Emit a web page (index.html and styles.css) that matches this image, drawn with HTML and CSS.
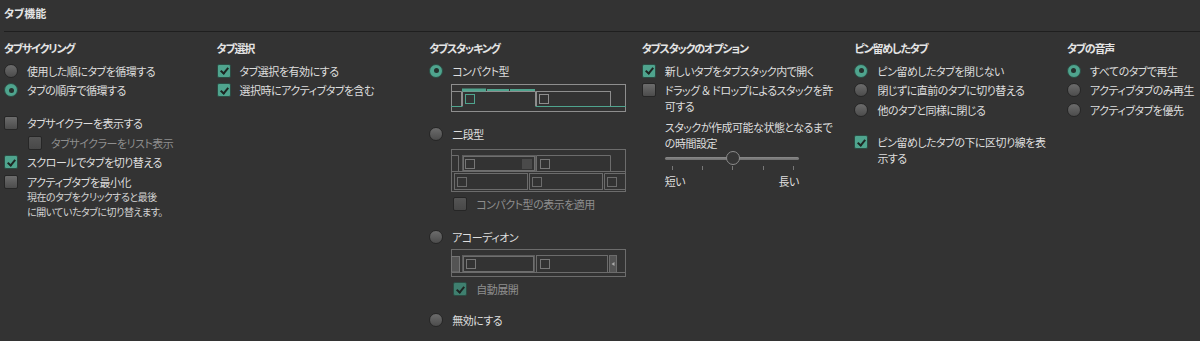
FILE: index.html
```html
<!DOCTYPE html>
<html lang="ja">
<head>
    <meta charset="UTF-8">
    <title>タブ機能</title>
    <link rel="stylesheet" href="styles.css">
</head>
<body>
    <div class="page">
        <h2 class="title">タブ機能</h2>
        <div class="columns">
            <section class="col">
                <h3>タブサイクリング</h3>
                <div class="opt"><span class="radio"></span><span>使用した順にタブを循環する</span></div>
                <div class="opt"><span class="radio on"></span><span>タブの順序で循環する</span></div>
                <div class="opt gap"><span class="box"></span><span>タブサイクラーを表示する</span></div>
                <div class="opt sub off"><span class="box"></span><span>タブサイクラーをリスト表示</span></div>
                <div class="opt"><span class="box on"></span><span>スクロールでタブを切り替える</span></div>
                <div class="opt"><span class="box"></span><span>アクティブタブを最小化</span></div>
                <p class="note">現在のタブをクリックすると最後<br>に開いていたタブに切り替えます。</p>
            </section>

            <section class="col">
                <h3>タブ選択</h3>
                <div class="opt"><span class="box on"></span><span>タブ選択を有効にする</span></div>
                <div class="opt"><span class="box on"></span><span>選択時にアクティブタブを含む</span></div>
            </section>

            <section class="col">
                <h3>タブスタッキング</h3>
                <div class="opt"><span class="radio on"></span><span>コンパクト型</span></div>
                <svg class="diagram d-compact" width="175" height="28" viewBox="0 0 175 28">
                    <rect x="0.5" y="0.5" width="174" height="27" fill="none" stroke="#8e8e8e"/>
                    <path d="M0 7.5H10.5V22" fill="none" stroke="#8e8e8e"/>
                    <path d="M11.5 22V7.5H84.5V22" fill="none" stroke="#8e8e8e"/>
                    <rect x="11" y="4.5" width="24" height="3" fill="#4fa48e"/>
                    <rect x="36" y="5" width="22" height="2" fill="#4fa48e"/>
                    <rect x="59" y="5" width="25" height="2" fill="#4fa48e"/>
                    <rect x="14.5" y="10.5" width="9" height="9" fill="none" stroke="#4fa48e"/>
                    <rect x="85.5" y="7.5" width="74" height="15" fill="none" stroke="#8e8e8e"/>
                    <rect x="88.5" y="10.5" width="9" height="9" fill="none" stroke="#8e8e8e"/>
                    <path d="M0 22.5H11.5M84.5 22.5H175" stroke="#4fa48e"/>
                </svg>

                <div class="opt after-diagram"><span class="radio"></span><span>二段型</span></div>
                <svg class="diagram d-double" width="175" height="44" viewBox="0 0 175 44">
                    <rect x="0.5" y="0.5" width="174" height="42" fill="none" stroke="#6c6c6c"/>
                    <path d="M0 6.5H7.5V22" fill="none" stroke="#6c6c6c"/>
                    <rect x="11.5" y="6.5" width="73" height="15.5" fill="none" stroke="#5c5c5c"/>
                    <rect x="12.5" y="7.5" width="71" height="14" fill="none" stroke="#6f6f6f"/>
                    <rect x="14.5" y="10.5" width="9" height="9" fill="none" stroke="#777"/>
                    <rect x="71" y="10" width="10" height="10" fill="#4a4a4a"/>
                    <path d="M85.5 22V6.5H159.5V22" fill="none" stroke="#6c6c6c"/>
                    <rect x="89.5" y="10.5" width="9" height="9" fill="none" stroke="#777"/>
                    <path d="M0 22.5H175" stroke="#6c6c6c"/>
                    <rect x="3.5" y="24.5" width="73" height="16" fill="none" stroke="#6c6c6c"/>
                    <rect x="6.5" y="28.5" width="9" height="9" fill="none" stroke="#6c6c6c"/>
                    <rect x="78.5" y="24.5" width="73" height="16" fill="none" stroke="#6c6c6c"/>
                    <rect x="81.5" y="28.5" width="9" height="9" fill="none" stroke="#6c6c6c"/>
                    <path d="M175 24.5H153.5V40.5H175" fill="none" stroke="#6c6c6c"/>
                    <rect x="156.5" y="28.5" width="9" height="9" fill="none" stroke="#6c6c6c"/>
                </svg>
                <div class="opt sub off tight"><span class="box"></span><span>コンパクト型の表示を適用</span></div>

                <div class="opt gap"><span class="radio"></span><span>アコーディオン</span></div>
                <svg class="diagram d-accordion" width="175" height="29" viewBox="0 0 175 29">
                    <rect x="0.5" y="0.5" width="174" height="27" fill="none" stroke="#6c6c6c"/>
                    <rect x="0.5" y="7.5" width="8" height="15.5" fill="#545454" stroke="#757575"/>
                    <rect x="11.5" y="6.5" width="72" height="17" fill="none" stroke="#5c5c5c"/>
                    <rect x="12.5" y="7.5" width="70" height="15" fill="none" stroke="#6f6f6f"/>
                    <rect x="15.5" y="10.5" width="9" height="9" fill="none" stroke="#777"/>
                    <rect x="85.5" y="6.5" width="71" height="17" fill="none" stroke="#6c6c6c"/>
                    <rect x="89.5" y="10.5" width="9" height="9" fill="none" stroke="#777"/>
                    <rect x="158.5" y="6.5" width="7" height="17" fill="#545454" stroke="#6c6c6c"/>
                    <path d="M163.5 13L160.5 15L163.5 17Z" fill="#aaa"/>
                    <path d="M0 23.5H175" stroke="#6c6c6c"/>
                </svg>
                <div class="opt sub off tight"><span class="box on"></span><span>自動展開</span></div>

                <div class="opt last"><span class="radio"></span><span>無効にする</span></div>
            </section>

            <section class="col">
                <h3>タブスタックのオプション</h3>
                <div class="opt"><span class="box on"></span><span>新しいタブをタブスタック内で開く</span></div>
                <div class="opt"><span class="box"></span><span>ドラッグ ＆ ドロップによるスタックを許<br>可する</span></div>
                <p class="para">スタックが作成可能な状態となるまで<br>の時間設定</p>
                <div class="slider">
                    <div class="track"></div>
                    <span class="thumb"></span>
                </div>
                <div class="ticks"><i></i><i></i><i></i><i></i><i></i></div>
                <div class="range-labels"><span>短い</span><span>長い</span></div>
            </section>

            <section class="col">
                <h3>ピン留めしたタブ</h3>
                <div class="opt"><span class="radio on"></span><span>ピン留めしたタブを閉じない</span></div>
                <div class="opt"><span class="radio"></span><span>閉じずに直前のタブに切り替える</span></div>
                <div class="opt"><span class="radio"></span><span>他のタブと同様に閉じる</span></div>
                <div class="opt gap-sm"><span class="box on"></span><span>ピン留めしたタブの下に区切り線を表<br>示する</span></div>
            </section>

            <section class="col">
                <h3>タブの音声</h3>
                <div class="opt"><span class="radio on"></span><span>すべてのタブで再生</span></div>
                <div class="opt"><span class="radio"></span><span>アクティブタブのみ再生</span></div>
                <div class="opt"><span class="radio"></span><span>アクティブタブを優先</span></div>
            </section>
        </div>
    </div>
</body>
</html>
```

FILE: styles.css
```css
body {
    margin: 0;
    background-color: #333333;
    color: #dedede;
    font-family: "Noto Sans CJK JP", "Noto Sans", sans-serif;
    font-size: 11px;
    letter-spacing: -0.5px;
    font-feature-settings: "palt";
    overflow: hidden;
}
.page {
    padding-left: 4px;
}
.title {
    margin: 0;
    padding: 4px 0 9px;
    font-size: 11px;
    font-weight: bold;
    line-height: 18px;
    letter-spacing: 0;
    color: #e4e4e4;
    border-bottom: 1px solid #1f1f1f;
}
.columns {
    display: grid;
    grid-template-columns: repeat(5, 212.6px) 1fr;
    padding-top: 7px;
}
h3 {
    margin: 0 0 4px;
    font-size: 11px;
    font-weight: bold;
    line-height: 18px;
    letter-spacing: -1.2px;
    color: #e4e4e4;
}
.opt {
    display: flex;
    gap: 9px;
    padding: 1.75px 0;
    line-height: 16px;
    white-space: nowrap;
}
.gap {
    margin-top: 13.5px;
}
.gap-sm {
    margin-top: 12.75px;
}
.sub {
    padding-left: 24px;
}
.off {
    color: #8e8e8e;
}
.tight {
    margin-top: 1.5px;
}
.after-diagram {
    margin-top: 12.25px;
}
.last {
    margin-top: 11.5px;
}

/* controls */
.radio,
.box {
    flex: none;
    position: relative;
    width: 14px;
    height: 14px;
    margin-top: 1px;
    box-sizing: border-box;
    border: 1px solid #262626;
    background: linear-gradient(#6c6c6c, #4c4c4c);
}
.radio {
    border-radius: 50%;
}
.box {
    border-radius: 2px;
}
.radio.on,
.box.on {
    background: #4fa48e;
    border-color: #2b4c43;
}
.radio.on::after {
    content: "";
    position: absolute;
    left: 3.5px;
    top: 3.5px;
    width: 5px;
    height: 5px;
    border-radius: 50%;
    background: #26312e;
}
.box.on::after {
    content: "";
    position: absolute;
    left: 4px;
    top: 1.5px;
    width: 3px;
    height: 6px;
    border: solid #1e2623;
    border-width: 0 2px 2px 0;
    transform: rotate(40deg);
}
.off .box {
    background: linear-gradient(#555, #484848);
}
.off .box.on {
    background: #3f7f6f;
}

/* tab stacking pictures */
.diagram {
    display: block;
    margin-left: 22px;
}
.d-compact {
    margin-top: 3.25px;
}
.d-double {
    margin-top: 5.25px;
}
.d-accordion {
    margin-top: 2.25px;
}

.note {
    margin: -2.25px 0 0 23px;
    font-size: 10px;
    line-height: 15px;
    color: #d4d4d4;
}
.para {
    margin: 3.25px 0 0 23px;
    line-height: 16px;
    white-space: nowrap;
}

/* slider */
.slider {
    position: relative;
    width: 134px;
    height: 14px;
    margin-left: 23px;
}
.track {
    position: absolute;
    left: 0;
    right: 0;
    top: 5.5px;
    height: 3px;
    border-radius: 2px;
    background: linear-gradient(#8a8a8a, #6e6e6e);
}
.thumb {
    position: absolute;
    left: 61px;
    top: 0;
    width: 14px;
    height: 14px;
    box-sizing: border-box;
    border-radius: 50%;
    border: 1.5px solid #8c8c8c;
    background: #353535;
}
.ticks {
    display: flex;
    justify-content: space-between;
    width: 122px;
    margin: 1px 0 0 30px;
}
.ticks i {
    width: 1px;
    height: 4px;
    background: #777;
}
.range-labels {
    display: flex;
    justify-content: space-between;
    width: 134px;
    margin: 3px 0 0 23px;
    line-height: 16px;
}
```
